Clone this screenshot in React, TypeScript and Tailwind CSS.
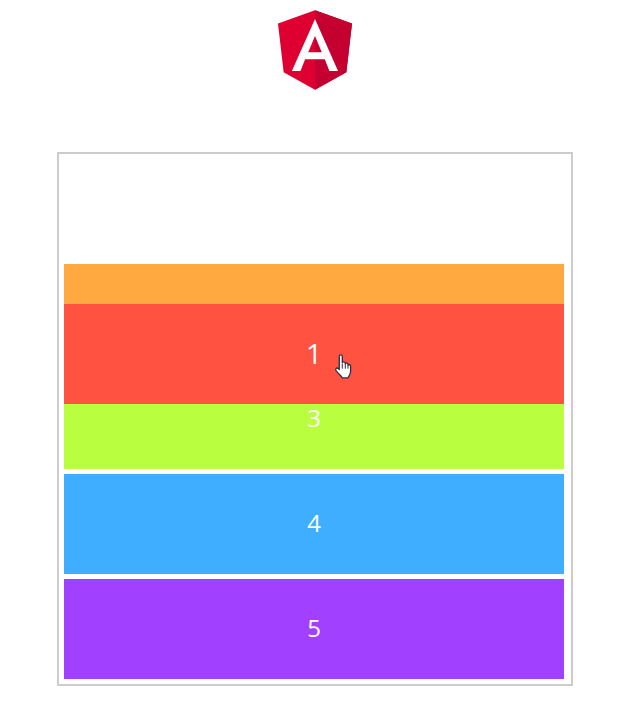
function Row({ n, color, lift = "pb-[2px]" }: { n: number; color: string; lift?: string }) {
  return (
    <div className={`mb-[5px] flex h-[100px] items-center justify-center text-white ${lift} ${color}`}>
      <span className="text-[24px] font-medium leading-none">{n}</span>
    </div>
  );
}

function HandCursor() {
  return (
    <svg className="absolute left-[275px] top-[200px]" width="19" height="25" viewBox="0.8 0 16.4 25">
      <path
        d="M4.800 2.200c0-1.800 3-1.800 3 0v6.300c.4-1 2.700-1 3 .3v1c.5-1 2.500-.8 2.700.5v.9c.6-.9 2.500-.6 2.600.9v5.100c0 2.400-.9 4-2 5.400-.4.600-.7 1.300-.7 1.300H7.700c-.3-1-1-1.800-2-2.700-1.500-1.400-3.300-3.300-4.200-4.700-1.100-1.700.9-3.300 2.300-2l1 1z"
        fill="#fff"
        stroke="#2a2f45"
        strokeWidth="1.300"
        strokeLinejoin="round"
      />
      <path d="M7.800 9.500v5.200M10.800 10v4.700M13.500 11v3.700" stroke="#2a2f45" strokeWidth="1" fill="none" />
    </svg>
  );
}

export default function App() {
  return (
    <div className="h-[713px] bg-white pt-[10px] font-['Open_Sans','Noto_Sans',sans-serif]">
      <svg className="ml-[278px] block" width="74" height="80" viewBox="31.9 30 186.2 200">
        <polygon fill="#DD0031" points="125,30 31.9,63.2 46.1,186.3 125,230 203.9,186.3 218.1,63.2" />
        <polygon fill="#C3002F" points="125,30 125,230 203.9,186.3 218.1,63.2" />
        <path
          fill="#fff"
          d="M125,52.1L66.8,182.6h21.700l11.700-29.200h49.400l11.700,29.200h21.700L125,52.1z M142,135.400H108l17-40.900L142,135.400z"
        />
      </svg>
      <div className="relative ml-[57px] mt-[62px] w-[516px] border-2 border-[#cccccc] pb-0 pl-[5px] pr-[7px] pt-[5px]">
        <div className="h-[105px]" />
        <Row n={2} color="bg-[#ffa940]" lift="pb-[5px]" />
        <Row n={3} color="bg-[#b9ff40]" />
        <Row n={4} color="bg-[#40aeff]" />
        <Row n={5} color="bg-[#a240ff]" />
        <div className="absolute left-[5px] top-[150px] flex h-[100px] w-[500px] items-center justify-center bg-[#ff5240] pb-[2px] text-white">
          <span className="text-[28px] font-medium leading-none">1</span>
        </div>
        <HandCursor />
      </div>
    </div>
  );
}
